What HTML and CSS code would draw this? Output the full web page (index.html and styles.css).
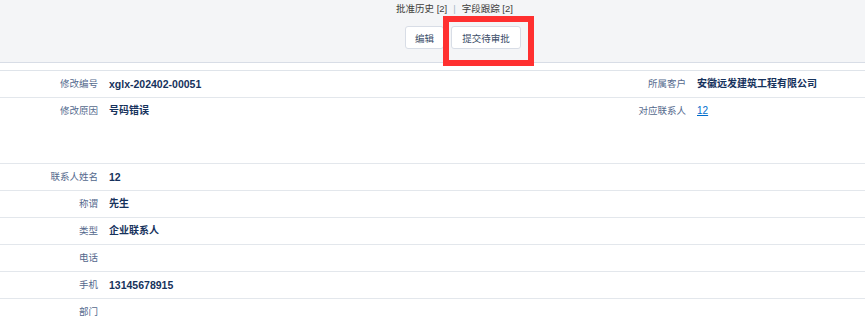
FILE: index.html
```html
<!DOCTYPE html>
<html lang="zh-CN">
<head>
    <meta charset="UTF-8">
    <title>修改申请</title>
    <link rel="stylesheet" href="styles.css">
</head>
<body>

<!-- Page header with related links and buttons -->
<div class="page-head">
    <div class="related-links">
        <a href="#">批准历史 [2]</a>
        <span class="sep">|</span>
        <a href="#">字段跟踪 [2]</a>
    </div>
    <div class="btn-row">
        <button class="btn">编辑</button>
        <button class="btn btn-wide">提交待审批</button>
        <span class="highlight"></span>
    </div>
</div>

<!-- Detail section -->
<div class="detail">
    <div class="row">
        <div class="label">修改编号</div>
        <div class="value value-num">xglx-202402-00051</div>
        <div class="label">所属客户</div>
        <div class="value">安徽远发建筑工程有限公司</div>
    </div>
    <div class="row row-tall">
        <div class="label">修改原因</div>
        <div class="value">号码错误</div>
        <div class="label">对应联系人</div>
        <div class="value"><a class="link" href="#">12</a></div>
    </div>
    <div class="row">
        <div class="label">联系人姓名</div>
        <div class="value value-num">12</div>
    </div>
    <div class="row">
        <div class="label">称谓</div>
        <div class="value">先生</div>
    </div>
    <div class="row">
        <div class="label">类型</div>
        <div class="value">企业联系人</div>
    </div>
    <div class="row">
        <div class="label">电话</div>
        <div class="value"></div>
    </div>
    <div class="row">
        <div class="label">手机</div>
        <div class="value value-num">13145678915</div>
    </div>
    <div class="row">
        <div class="label">部门</div>
        <div class="value"></div>
    </div>
</div>

</body>
</html>
```

FILE: styles.css
```css
/* Reset */
* {
    margin: 0;
    padding: 0;
    box-sizing: border-box;
}
body {
    font-family: "Liberation Sans", "Noto Sans CJK SC", sans-serif;
    font-size: 10px;
    color: #16325c;
    background-color: #fff;
    overflow: hidden;
}

/* Header band */
.page-head {
    background-color: #f4f5f7;
    border-bottom: 1px solid #d8dde6;
    height: 63px;
    display: flex;
    flex-direction: column;
    align-items: center;
    padding-left: 61px;
}
.related-links {
    margin-top: 2px;
    height: 14px;
    line-height: 14px;
    font-size: 9.5px;
    display: flex;
    gap: 6px;
    margin-left: -17px;
}
.related-links a {
    color: #3e3e3c;
    text-decoration: none;
}
.related-links .sep {
    color: #a8b7c7;
}
.btn-row {
    position: relative;
    margin-top: 10px;
    display: flex;
    gap: 7px;
}
.btn {
    height: 23px;
    width: 39px;
    background-color: #fff;
    border: 1px solid #d8dde6;
    border-radius: 3px;
    color: #3b4d68;
    font-family: "Liberation Sans", "Noto Sans CJK SC", sans-serif;
    font-size: 9.5px;
}
.btn-wide {
    width: 70px;
}

/* Red annotation box */
.highlight {
    position: absolute;
    left: 38px;
    top: -10px;
    width: 91px;
    height: 50px;
    border: 6px solid #ff3030;
}

/* Detail rows */
.detail {
    margin-top: 7px;
    border-top: 1px solid #dfe4ea;
}
.row {
    display: grid;
    grid-template-columns: 109px 479px 109px 1fr;
    height: 27px;
    border-bottom: 1px solid #e3e7ec;
}
.row-tall {
    height: 66px;
}
.label {
    text-align: right;
    padding-right: 11px;
    padding-top: 6px;
    line-height: 14px;
    color: #54698d;
    font-size: 9.5px;
}
.value {
    padding-top: 6px;
    line-height: 14px;
    font-weight: bold;
    font-size: 10px;
    color: #16325c;
}
.value-num {
    font-size: 10.5px;
}
.link {
    color: #006dcc;
    font-weight: normal;
    text-decoration: underline;
}
```
